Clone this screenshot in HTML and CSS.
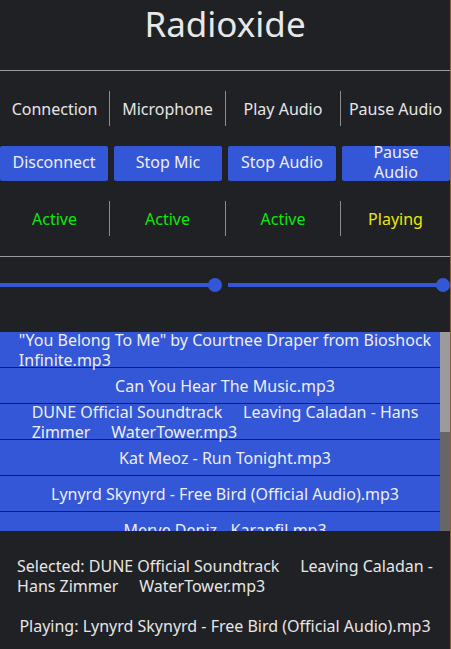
FILE: index.html
```
<!DOCTYPE html>
<html>
<head>
<meta charset="utf-8">
<link rel="stylesheet" href="styles.css">
</head>
<body>
<div class="app">
  <h1 class="title">Radioxide</h1>
  <div class="rule rule-top"></div>
  <div class="row4 labels">
    <div class="cell">Connection</div><div class="sep"></div>
    <div class="cell">Microphone</div><div class="sep"></div>
    <div class="cell">Play Audio</div><div class="sep"></div>
    <div class="cell">Pause Audio</div>
  </div>
  <div class="buttons">
    <button class="btn">Disconnect</button>
    <button class="btn">Stop Mic</button>
    <button class="btn">Stop Audio</button>
    <button class="btn">Pause Audio</button>
  </div>
  <div class="row4 status">
    <div class="cell green">Active</div><div class="sep"></div>
    <div class="cell green">Active</div><div class="sep"></div>
    <div class="cell green">Active</div><div class="sep"></div>
    <div class="cell yellow">Playing</div>
  </div>
  <div class="rule rule-mid"></div>
  <div class="sliders">
    <div class="slider"><div class="track"></div><div class="knob"></div></div>
    <div class="slider"><div class="track"></div><div class="knob"></div></div>
  </div>
  <div class="list">
    <div class="items">
      <div class="item"><span class="txt">"You Belong To Me" by Courtnee Draper from Bioshock<br>Infinite.mp3</span></div>
      <div class="item"><span class="txt">Can You Hear The Music.mp3</span></div>
      <div class="item"><span class="txt">DUNE Official Soundtrack     Leaving Caladan - Hans<br>Zimmer     WaterTower.mp3</span></div>
      <div class="item"><span class="txt">Kat Meoz - Run Tonight.mp3</span></div>
      <div class="item"><span class="txt">Lynyrd Skynyrd - Free Bird (Official Audio).mp3</span></div>
      <div class="item"><span class="txt">Merve Deniz - Karanfil.mp3</span></div>
    </div>
    <div class="scrollbar"><div class="scroll-thumb"></div></div>
  </div>
  <div class="footer">
    <p class="info"><span class="txt">Selected: DUNE Official Soundtrack     Leaving Caladan -<br>Hans Zimmer     WaterTower.mp3</span></p>
    <p class="info info-play"><span class="txt">Playing: Lynyrd Skynyrd - Free Bird (Official Audio).mp3</span></p>
  </div>
</div>
</body>
</html>
```
FILE: styles.css
```
html, body {
  margin: 0;
  padding: 0;
  background: #202125;
}
body {
  font-family: "Noto Sans", "Open Sans", sans-serif;
  font-size: 16px;
  color: #e6e6e6;
}
.app {
  width: 450px;
  height: 649px;
  border-right: 1px solid #93602f;
  overflow: hidden;
}
.title {
  margin: 0;
  font-size: 35px;
  font-weight: 400;
  line-height: 48px;
  text-align: center;
  color: #e8e8e8;
}
.rule {
  height: 1px;
  background: #9a9a9a;
}
.rule-top { margin-top: 22px; }
.rule-mid { margin-top: 20px; }
.row4 {
  display: grid;
  grid-template-columns: 109px 1px 115px 1px 114px 1px 109px;
  height: 35px;
  margin-top: 20px;
}
.cell {
  display: flex;
  align-items: center;
  justify-content: center;
  line-height: 20px;
  white-space: nowrap;
}
.sep { background: #8c8c8c; }
.green { color: #0fe60f; }
.yellow { color: #e8e80a; }
.buttons {
  display: grid;
  grid-template-columns: repeat(4, 1fr);
  gap: 6px;
  margin-top: 20px;
}
.btn {
  display: flex;
  align-items: center;
  justify-content: center;
  text-align: center;
  height: 35px;
  padding: 0 10px 4px;
  border: none;
  border-radius: 2px;
  background: #3357d6;
  color: #eeeeee;
  font-family: inherit;
  font-size: 16px;
  line-height: 20px;
  overflow: visible;
}
.sliders {
  display: grid;
  grid-template-columns: 1fr 1fr;
  gap: 6px;
  margin-top: 21px;
  height: 14px;
}
.slider {
  display: flex;
  align-items: center;
}
.track {
  flex: 1;
  height: 4px;
  background: #3357d6;
  margin-right: -7px;
}
.knob {
  width: 14px;
  height: 14px;
  border-radius: 50%;
  background: #3357d6;
  position: relative;
}
.list {
  position: relative;
  margin-top: 40px;
  height: 199px;
  overflow: hidden;
}
.item {
  box-sizing: border-box;
  height: 36px;
  border-bottom: 1px solid #1f2028;
  background: #3357d6;
  display: flex;
  align-items: center;
  justify-content: center;
  color: #eeeeee;
  line-height: 20px;
}
.txt {
  display: inline-block;
  text-align: left;
  white-space: pre;
}
.scrollbar {
  position: absolute;
  top: 0;
  right: 0;
  width: 10px;
  height: 100%;
  background: #666666;
}
.scroll-thumb {
  height: 100px;
  background: #9b9b9b;
}
.footer {
  padding-top: 25px;
}
.info {
  margin: 0;
  text-align: center;
  line-height: 20px;
  color: #e6e6e6;
}
.info-play { margin-top: 20px; }
```
